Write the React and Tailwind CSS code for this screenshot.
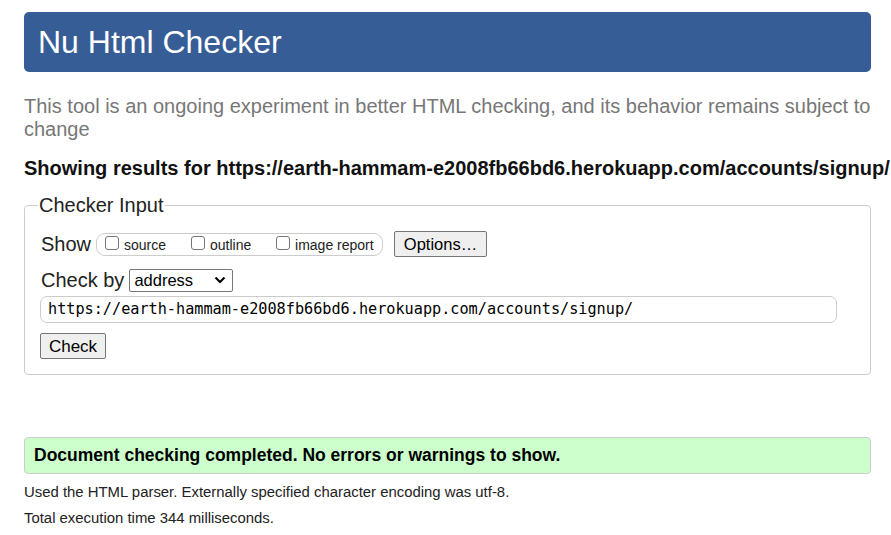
import React from "react";

const url = "https://earth-hammam-e2008fb66bd6.herokuapp.com/accounts/signup/";

const Box = ({ label }) => (
  <label className="flex items-center gap-[5px]">
    <span className="w-[14px] h-[14px] border border-[#767676] rounded-[3px] bg-white mb-[4px]" />
    <span>{label}</span>
  </label>
);

const App = () => {
  return (
    <div className="w-[891px] h-[535px] bg-white overflow-hidden font-['Liberation_Sans',Arial,sans-serif] text-[#222]">
      {/* Title bar */}
      <div className="ml-[24px] mt-[12px] w-[847px] h-[60px] bg-[#365d95] rounded-[5px] flex items-center pl-[14px]">
        <h1 className="text-white text-[32px] leading-none">Nu Html Checker</h1>
      </div>

      <p className="ml-[24px] mt-[23px] w-[850px] text-[20px] leading-[23px] text-[#777]">
        This tool is an ongoing experiment in better HTML checking, and its behavior remains subject to change
      </p>

      <h2 className="ml-[24px] mt-[15px] text-[20px] leading-[24px] font-bold whitespace-nowrap text-[#111]">
        Showing results for {url}
      </h2>

      {/* Checker input */}
      <fieldset className="ml-[24px] mt-[13px] w-[847px] border border-[#ccc] rounded-[4px] pl-[15px] pr-[33px] pt-[4px] pb-[15px]">
        <legend className="ml-[-2px] px-[1px] text-[20px] leading-[24px]">Checker Input</legend>

        <div className="flex items-center h-[30px] mt-[8px]">
          <span className="text-[20px] ml-[1px]">Show</span>
          <div className="ml-[5px] h-[23px] w-[287px] border border-[#ccc] rounded-[9px] flex items-center pl-[8px] text-[14px] pt-[2px]">
            <div className="w-[86px]"><Box label="source" /></div>
            <div className="w-[85px]"><Box label="outline" /></div>
            <Box label="image report" />
          </div>
          <button className="ml-[11px] h-[26px] w-[93px] border border-[#767676] rounded-[2px] bg-[#efefef] text-[16.5px] text-black">
            Options…
          </button>
        </div>

        <div className="flex items-center h-[28px] mt-[7px]">
          <span className="text-[20px] ml-[1px]">Check by</span>
          <div className="ml-[5px] h-[23px] w-[104px] border border-[#767676] rounded-[2px] flex items-center justify-between pl-[4px] pr-[6px] text-[16.5px] text-black">
            <span>address</span>
            <svg width="12" height="8" viewBox="0 0 12 8">
              <path d="M1.5 1.5 L6 6 L10.5 1.5" fill="none" stroke="#000" strokeWidth="2" />
            </svg>
          </div>
        </div>

        <div className="mt-[2px] h-[27px] w-[797px] border border-[#ccc] rounded-[7px] flex items-center pl-[7px] font-['DejaVu_Sans_Mono',monospace] text-[15.2px] text-black">
          {url}
        </div>

        <button className="block mt-[10px] h-[26px] w-[66px] border border-[#767676] rounded-[2px] bg-[#efefef] text-[17px] text-black">
          Check
        </button>
      </fieldset>

      {/* Result */}
      <div className="ml-[24px] mt-[62px] w-[847px] h-[37px] bg-[#ccffcc] border border-[#ccc] rounded-[4px] flex items-center pl-[9px]">
        <span className="font-bold text-[17.5px] text-black">Document checking completed. No errors or warnings to show.</span>
      </div>

      <p className="ml-[24px] mt-[9px] text-[14.9px] leading-[18px]">
        Used the HTML parser. Externally specified character encoding was utf-8.
      </p>
      <p className="ml-[24px] mt-[8px] text-[14.9px] leading-[18px]">Total execution time 344 milliseconds.</p>
    </div>
  );
};

export default App;
